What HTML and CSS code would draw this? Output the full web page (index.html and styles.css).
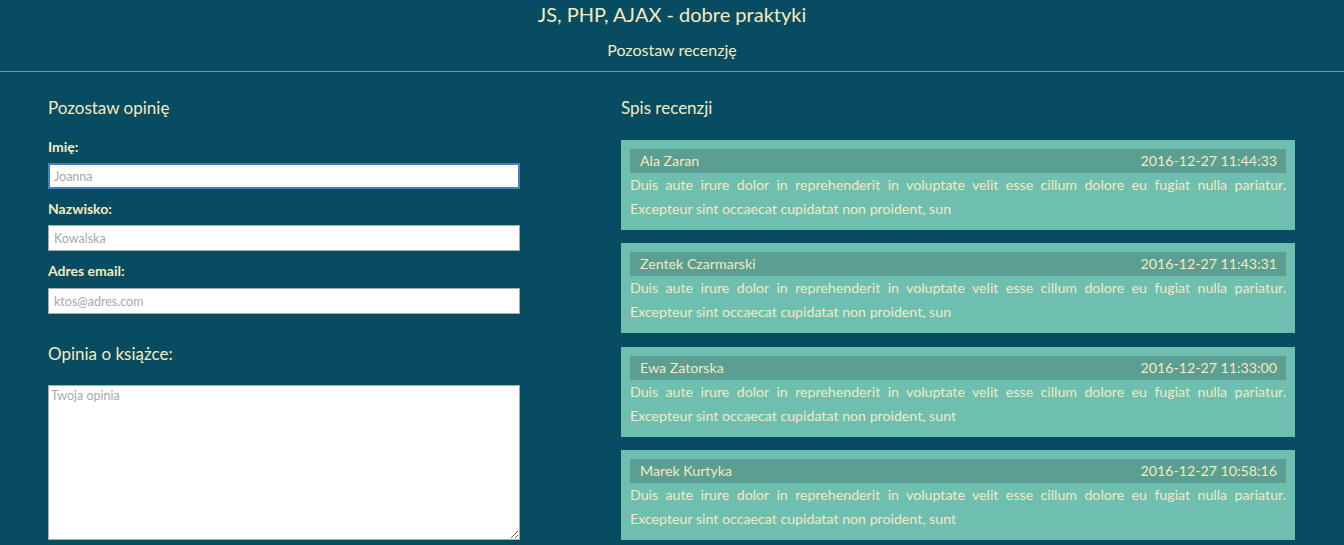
FILE: index.html
```html
<!DOCTYPE html>
<html lang="pl">
<head>
<meta charset="utf-8">
<title>JS, PHP, AJAX - dobre praktyki</title>
<link rel="stylesheet" href="styles.css">
</head>
<body>
<header class="top">
  <h1 class="site-title">JS, PHP, AJAX - dobre praktyki</h1>
  <h2 class="site-sub">Pozostaw recenzję</h2>
</header>
<main class="layout">
  <section class="form-col">
    <h3 class="col-title">Pozostaw opinię</h3>
    <form class="form">
      <label class="lbl lbl-first" for="imie">Imię:</label>
      <input class="field field-focus" id="imie" type="text" placeholder="Joanna" autofocus>
      <label class="lbl" for="nazwisko">Nazwisko:</label>
      <input class="field" id="nazwisko" type="text" placeholder="Kowalska">
      <label class="lbl lbl-last" for="email">Adres email:</label>
      <input class="field" id="email" type="text" placeholder="ktos@adres.com">
      <h3 class="opinion-title">Opinia o książce:</h3>
      <textarea class="area" placeholder="Twoja opinia"></textarea>
    </form>
  </section>
  <section class="list-col">
    <h3 class="col-title">Spis recenzji</h3>
    <div class="reviews">
      <article class="review">
        <div class="review-head"><span>Ala Zaran</span><span>2016-12-27 11:44:33</span></div>
        <p class="review-text">Duis aute irure dolor in reprehenderit in voluptate velit esse cillum dolore eu fugiat nulla pariatur. Excepteur sint occaecat cupidatat non proident, sun</p>
      </article>
      <article class="review">
        <div class="review-head"><span>Zentek Czarmarski</span><span>2016-12-27 11:43:31</span></div>
        <p class="review-text">Duis aute irure dolor in reprehenderit in voluptate velit esse cillum dolore eu fugiat nulla pariatur. Excepteur sint occaecat cupidatat non proident, sun</p>
      </article>
      <article class="review">
        <div class="review-head"><span>Ewa Zatorska</span><span>2016-12-27 11:33:00</span></div>
        <p class="review-text">Duis aute irure dolor in reprehenderit in voluptate velit esse cillum dolore eu fugiat nulla pariatur. Excepteur sint occaecat cupidatat non proident, sunt</p>
      </article>
      <article class="review">
        <div class="review-head"><span>Marek Kurtyka</span><span>2016-12-27 10:58:16</span></div>
        <p class="review-text">Duis aute irure dolor in reprehenderit in voluptate velit esse cillum dolore eu fugiat nulla pariatur. Excepteur sint occaecat cupidatat non proident, sunt</p>
      </article>
    </div>
  </section>
</main>
</body>
</html>
```
FILE: styles.css
```css
* { box-sizing: border-box; }
html, body { margin: 0; padding: 0; }
body {
  background: #084c61;
  color: #f3eac0;
  font-family: Lato, "Open Sans", sans-serif;
  overflow: hidden;
}
.top {
  text-align: center;
  border-bottom: 1px solid #56a3a6;
  height: 72px;
}
.site-title {
  margin: 0;
  padding-top: 2px;
  font-size: 20px;
  font-weight: 400;
  line-height: 24px;
}
.site-sub {
  margin: 0;
  padding-top: 13px;
  font-size: 16px;
  font-weight: 400;
  line-height: 22px;
}
.layout {
  display: grid;
  grid-template-columns: 573px 674px;
  padding: 0 48px;
}
.col-title {
  margin: 0;
  padding-top: 24px;
  font-size: 17px;
  font-weight: 400;
  line-height: 24px;
}
.form {
  display: flex;
  flex-direction: column;
  width: 472px;
}
.lbl {
  font-size: 14px;
  font-weight: 700;
  line-height: 18px;
  margin-top: 11px;
  margin-bottom: 7px;
}
.lbl-first { margin-top: 18px; }
.lbl-last { margin-bottom: 8px; }
.field {
  height: 26px;
  width: 472px;
  border: 1px solid #a9a9a9;
  background: #fff;
  padding: 2px 5px;
  font-family: Lato, sans-serif;
  font-size: 12.5px;
  color: #333;
  outline: none;
}
.field::placeholder, .area::placeholder { color: #a9a9a9; }
.field-focus, .field:focus {
  border: 2px solid #4a7ec4;
  padding-left: 4px;
}
.opinion-title {
  margin: 28px 0 0;
  font-size: 17px;
  font-weight: 400;
  line-height: 24px;
}
.area {
  margin-top: 19px;
  width: 472px;
  height: 155px;
  border: 1px solid #a9a9a9;
  padding: 2px;
  font-family: Lato, sans-serif;
  font-size: 12.5px;
  resize: both;
  outline: none;
}
.reviews {
  display: flex;
  flex-direction: column;
  gap: 13.3px;
  margin-top: 20px;
}
.review {
  background: #6fbfb0;
  padding: 9px;
  font-size: 14.2px;
}
.review-head {
  background: #5b9f93;
  height: 24px;
  line-height: 24px;
  display: flex;
  justify-content: space-between;
  padding: 0 9px 0 10px;
}
.review-text {
  margin: 0;
  line-height: 24px;
  text-align: justify;
}
```
